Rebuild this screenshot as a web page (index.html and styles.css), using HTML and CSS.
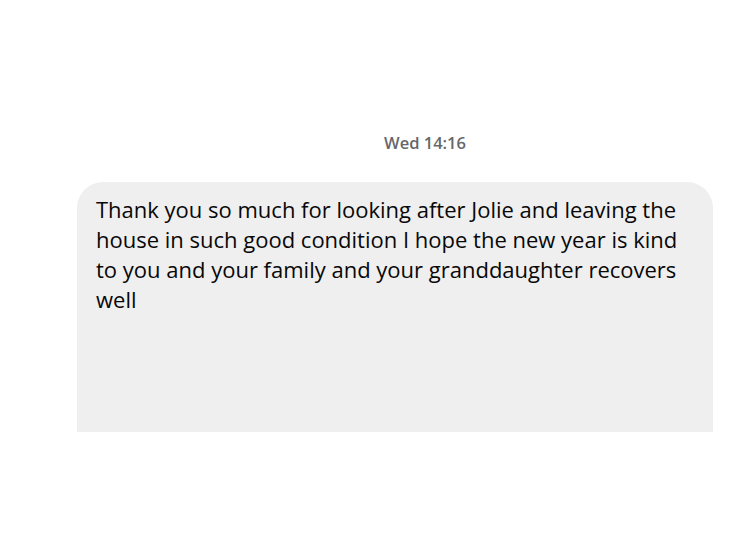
FILE: index.html
```html
<!DOCTYPE html>
<html>
<head>
<meta charset="utf-8">
<link rel="stylesheet" href="styles.css">
</head>
<body>
<div class="thread">
  <div class="stamp">Wed 14:16</div>
  <div class="bubble">
    <p class="msg">Thank you so much for looking after Jolie and leaving the house in such good condition I hope the new year is kind to you and your family and your granddaughter recovers well</p>
  </div>
</div>
</body>
</html>
```
FILE: styles.css
```css
html, body {
  margin: 0;
  padding: 0;
  background: #ffffff;
}
.thread {
  width: 730px;
  height: 560px;
  display: flex;
  flex-direction: column;
  font-family: "Open Sans", "Noto Sans", sans-serif;
}
.stamp {
  margin-top: 132px;
  padding-left: 120px;
  text-align: center;
  font-size: 16.5px;
  font-weight: 600;
  color: #65676b;
  line-height: 22px;
}
.bubble {
  margin-top: 28px;
  margin-left: 77px;
  width: 636px;
  height: 250px;
  box-sizing: border-box;
  background: #efefef;
  border-radius: 26px 26px 0 0;
  padding: 12px 23px 0 19px;
}
.msg {
  margin: 0;
  font-size: 22px;
  line-height: 30px;
  color: #080808;
}
```
